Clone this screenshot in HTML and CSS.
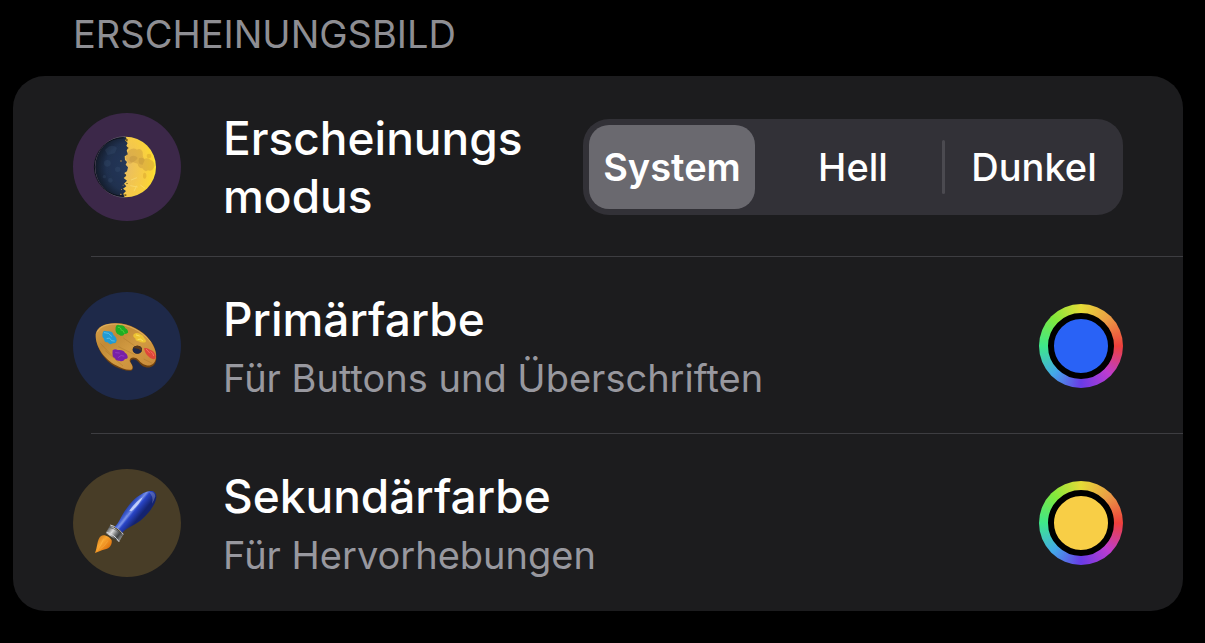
FILE: index.html
```html
<!DOCTYPE html>
<html lang="de">
<head>
  <meta charset="UTF-8">
  <title>Einstellungen</title>
  <meta name="viewport" content="width=device-width, initial-scale=1.0">
  <link rel="stylesheet" href="styles.css">
</head>
<body>

  <h2 class="section-title">ERSCHEINUNGSBILD</h2>

  <div class="card">

    <!-- Erscheinungsmodus -->
    <div class="row">
      <div class="icon icon-mode">
        <svg viewBox="9 13 324 324" aria-hidden="true">
          <defs>
            <radialGradient id="moonLight" cx="0.1" cy="0.5" r="0.9">
              <stop offset="0" stop-color="#e9bd62"/>
              <stop offset="0.5" stop-color="#f6ca48"/>
              <stop offset="0.85" stop-color="#fbd733"/>
              <stop offset="1" stop-color="#fff03a"/>
            </radialGradient>
            <radialGradient id="moonDark" cx="0.6" cy="0.5" r="0.6">
              <stop offset="0" stop-color="#263a5e"/>
              <stop offset="0.7" stop-color="#20314f"/>
              <stop offset="1" stop-color="#131b29"/>
            </radialGradient>
            <clipPath id="moonClip"><circle cx="167" cy="175" r="91"/></clipPath>
          </defs>
          <circle cx="167" cy="175" r="91" fill="url(#moonDark)"/>
          <g clip-path="url(#moonClip)">
            <path d="M163 82 L170 89 L165 95 L173 103 L169 111 L174 117 L170 126 L174 137 L164 143 L165 154 L171 160 L167 168 L174 176 L171 188 L163 193 L169 201 L161 208 L171 216 L162 225 L169 233 L159 240 L168 247 L160 255 L165 269 H262 V82 Z" fill="url(#moonLight)"/>
            <path d="M178 124 q12 -9 23 -1 q11 -6 17 7 q-1 12 4 21 q13 -6 20 3 q11 4 12 17 q-7 20 -20 14 q-9 7 -17 -6 q-13 -2 -14 -14 l-14 -4 q-11 8 -16 0 l-6 -13 q2 -17 11 -24 Z" fill="#b98a3a" opacity="0.35"/>
            <path d="M180 145 q13 -9 23 3 q-7 12 -19 13 q-9 -4 -4 -16 Z M207 149 q12 -5 17 5 l-6 14 q-16 1 -11 -19 Z" fill="#a87c35" opacity="0.25"/>
            <circle cx="237" cy="142" r="7" fill="#d39a2a" opacity="0.4"/>
            <ellipse cx="224" cy="201" rx="5" ry="9" fill="#d39a2a" opacity="0.4"/>
            <path d="M183 214 l18 -7 M181 231 l22 4 M192 248 l8 -17 M211 229 l14 10" stroke="#fff39b" stroke-width="3" opacity="0.35"/>
            <path d="M165 91 h8 v7 h-5 Z M171 116 h4 v4 h-4 Z M164 196 h4 v4 h-4 Z M169 223 h4 v3 h-4 Z M163 257 h6 v5 h-6 Z" fill="#55421c" opacity="0.8"/>
            <path d="M151 155 h4 v4 h-4 Z M158 228 h3 v3 h-3 Z M153 241 h3 v3 h-3 Z M150 255 h5 v4 h-5 Z" fill="#c89642" opacity="0.8"/>
            <g fill="#496384" opacity="0.18">
              <path d="M105 124 q20 -22 36 -6 l-7 16 l-21 5 Z"/>
              <circle cx="112" cy="164" r="10"/>
              <circle cx="143" cy="182" r="8"/>
              <circle cx="121" cy="215" r="7"/>
              <circle cx="103" cy="204" r="5"/>
            </g>
          </g>
          <path d="M165 84 A91 91 0 0 0 165 266" fill="none" stroke="#76777b" stroke-width="2"/>
          <path d="M161 87 A88 88 0 0 0 161 263" fill="none" stroke="#0c111b" stroke-width="3"/>
        </svg>
      </div>
      <div class="text">
        <div class="title" id="modeLabel">Erscheinungs<wbr>modus</div>
      </div>
      <div class="segmented" role="radiogroup" aria-labelledby="modeLabel">
        <label class="segment"><input type="radio" name="mode" value="system" checked>System</label>
        <span class="separator"></span>
        <label class="segment"><input type="radio" name="mode" value="light">Hell</label>
        <span class="separator"></span>
        <label class="segment"><input type="radio" name="mode" value="dark">Dunkel</label>
      </div>
    </div>

    <hr>

    <!-- Primärfarbe -->
    <div class="row">
      <div class="icon icon-primary">
        <svg viewBox="9 12 324 324" aria-hidden="true">
          <defs>
            <linearGradient id="wood" x1="0" y1="0" x2="1" y2="1">
              <stop offset="0" stop-color="#d7a04a"/>
              <stop offset="0.3" stop-color="#c18a36"/>
              <stop offset="0.55" stop-color="#d29b42"/>
              <stop offset="1" stop-color="#c7893a"/>
            </linearGradient>
          </defs>
          <path d="M78 142 C80 119 103 106 135 106 C177 104 220 128 240 156 C254 174 263 198 258 219 C254 235 240 242 225 237 C212 233 207 221 197 215 C189 211 180 215 182 223 C187 234 192 238 187 246 C177 253 154 244 136 236 C104 219 77 181 78 142 Z" fill="#71420f"/>
          <path fill-rule="evenodd" d="M77 139 C80 117 104 106 135 106 C177 105 218 128 239 156 C253 174 262 197 257 214 C253 230 240 236 227 231 C213 228 208 216 198 210 C187 205 178 211 179 219 C184 229 191 235 186 244 C176 249 155 241 138 232 C106 216 75 178 77 139 Z M188 185 a14 12 0 1 0 28 0 a14 12 0 1 0 -28 0 Z" fill="url(#wood)"/>
          <path d="M82 132 C92 111 121 106 147 109 C190 113 226 140 242 163" fill="none" stroke="#e6bd70" stroke-width="2"/>
          <path d="M91 166 L132 209 M145 176 L194 200 M160 150 L193 173 M221 213 L247 226 M106 188 L159 234" stroke="#a26c24" stroke-width="2" opacity="0.5"/>
          <path d="M188 185 a14 12 0 1 0 28 0 a14 12 0 1 0 -28 0 Z" fill="#1c284a"/>
          <path d="M190 181 q5 -11 17 -7 q11 5 8 16 q-10 -12 -25 -9 Z" fill="#5c3a18"/>
          <path d="M98 135 q2 -10 12 -5 q18 -2 20 10 q11 9 10 18 q-2 9 -11 8 q-10 6 -16 -3 q-11 0 -11 -11 q-7 -5 -4 -17 Z" fill="#239bd2"/>
          <path d="M103 134 l12 2 l10 9 M111 151 q9 -5 14 7 l8 1" fill="none" stroke="#68ccf1" stroke-width="3" stroke-linecap="round" opacity="0.7"/>
          <path d="M137 117 q3 -10 13 -5 q12 -3 16 9 q9 4 8 13 q-5 4 -11 4 q-5 10 -16 2 q-13 -4 -10 -23 Z" fill="#1fae23"/>
          <path d="M145 118 q8 -1 9 9 M158 127 l5 8" fill="none" stroke="#62df42" stroke-width="3" stroke-linecap="round" opacity="0.7"/>
          <path d="M191 139 q8 -7 18 -2 q11 4 14 14 q8 8 3 12 q-12 2 -20 -3 q-10 0 -10 -9 q-9 -4 -5 -12 Z" fill="#edc333"/>
          <path d="M199 141 l9 3 M204 154 q8 -4 14 4" fill="none" stroke="#ffea70" stroke-width="3" stroke-linecap="round" opacity="0.8"/>
          <path d="M222 181 q8 -4 18 4 q13 4 17 17 q2 12 -7 12 q-10 -2 -16 -10 q-8 -5 -12 -23 Z" fill="#df4639"/>
          <path d="M229 184 l10 11 M243 191 q7 5 8 12" fill="none" stroke="#ff8071" stroke-width="3" stroke-linecap="round" opacity="0.7"/>
          <path d="M128 187 q7 -6 15 -1 q17 -2 22 8 q9 5 8 16 q-2 3 -8 3 q-7 11 -17 5 q-10 2 -14 -8 q-9 -2 -6 -23 Z" fill="#7820a6"/>
          <path d="M137 194 l11 1 M145 208 q8 -10 17 -4" fill="none" stroke="#a14ad0" stroke-width="3" stroke-linecap="round" opacity="0.6"/>
        </svg>
      </div>
      <div class="text">
        <label class="title" for="primaryColor">Primärfarbe</label>
        <div class="subtitle">Für Buttons und Überschriften</div>
      </div>
      <input type="color" class="color-well" id="primaryColor" value="#2962f6">
    </div>

    <hr>

    <!-- Sekundärfarbe -->
    <div class="row">
      <div class="icon icon-secondary">
        <svg viewBox="9 12 324 324" aria-hidden="true">
          <defs>
            <linearGradient id="handle" gradientUnits="userSpaceOnUse" x1="174" y1="120" x2="212" y2="151">
              <stop offset="0" stop-color="#233b9c"/>
              <stop offset="0.25" stop-color="#405fd2"/>
              <stop offset="0.4" stop-color="#7890e8"/>
              <stop offset="0.55" stop-color="#2945c7"/>
              <stop offset="1" stop-color="#14236f"/>
            </linearGradient>
            <linearGradient id="ferrule" gradientUnits="userSpaceOnUse" x1="112" y1="192" x2="155" y2="225">
              <stop offset="0" stop-color="#5c5e5e"/>
              <stop offset="0.3" stop-color="#dedede"/>
              <stop offset="0.5" stop-color="#858788"/>
              <stop offset="0.7" stop-color="#3e4041"/>
              <stop offset="1" stop-color="#a9aaab"/>
            </linearGradient>
            <linearGradient id="bristle" x1="0" y1="0" x2="1" y2="1">
              <stop offset="0" stop-color="#b9630f"/>
              <stop offset="0.4" stop-color="#f9a52f"/>
              <stop offset="0.7" stop-color="#e47d14"/>
              <stop offset="1" stop-color="#91500c"/>
            </linearGradient>
          </defs>
          <path d="M75 264 C83 248 80 225 92 214 C102 206 120 216 125 226 C127 237 121 250 106 253 C94 256 86 261 75 264 Z" fill="url(#bristle)"/>
          <path d="M82 257 Q94 240 101 221 M91 252 Q105 242 113 229" fill="none" stroke="#ffd169" stroke-width="2" opacity="0.4"/>
          <path d="M121 180 L160 208 L147 231 L107 204 Z" fill="url(#ferrule)"/>
          <path d="M121 180 Q146 187 160 208 M110 202 Q134 209 147 230" fill="none" stroke="#d7d8da" stroke-width="3"/>
          <path d="M118 187 Q143 193 156 213" fill="none" stroke="#4b4d50" stroke-width="2"/>
          <path d="M133 186 C148 174 150 157 169 131 C187 105 213 82 240 78 C252 77 260 84 259 97 C257 119 238 141 220 159 C198 181 174 184 157 203 C151 195 143 189 133 186 Z" fill="url(#handle)"/>
          <path d="M178 137 Q199 108 218 97 Q209 118 184 139 Z" fill="#d8e1ff" opacity="0.8"/>
          <path d="M145 187 Q160 170 171 153" fill="none" stroke="#7890e6" stroke-width="5" stroke-linecap="round" opacity="0.7"/>
          <path d="M237 82 Q254 78 256 94 Q253 106 246 116 Q252 94 237 82 Z" fill="#7a88c5" opacity="0.5"/>
        </svg>
      </div>
      <div class="text">
        <label class="title" for="secondaryColor">Sekundärfarbe</label>
        <div class="subtitle">Für Hervorhebungen</div>
      </div>
      <input type="color" class="color-well" id="secondaryColor" value="#f8ce46">
    </div>

  </div>

</body>
</html>
```

FILE: styles.css
```css
/* Grundlayout */
body {
  margin: 0;
  padding: 10px 22px 32px 13px;
  background: #000;
  color: #fff;
  font-family: Inter, "Liberation Sans", sans-serif;
}

.section-title {
  margin: 0 0 18px;
  padding-left: 60px;
  font-size: 38px;
  line-height: 48px;
  font-weight: 400;
  color: #8e8e93;
}

/* Karte mit Zeilen */
.card {
  padding-bottom: 1px;
  background: #1c1c1e;
  border-radius: 32px;
  overflow: hidden;
}
.card hr {
  height: 1px;
  margin: 0 0 0 78px;
  border: none;
  background: #3d3d41;
}
.row {
  display: flex;
  align-items: center;
  padding: 33px 60px 31px;
}
.text {
  flex: 1;
  margin-left: 42px;
}
.title {
  display: block;
  font-size: 46px;
  line-height: 58px;
  font-weight: 500;
}
.subtitle {
  margin-top: 6px;
  font-size: 38px;
  line-height: 48px;
  color: #98989f;
}

/* Runde Symbole */
.icon {
  flex: none;
  width: 108px;
  height: 108px;
  border-radius: 50%;
}
.icon svg {
  display: block;
}
.icon-mode {
  background: #3c2849;
}
.icon-primary {
  background: #1e2949;
}
.icon-secondary {
  background: #483d27;
}

/* Umschalter System / Hell / Dunkel */
.segmented {
  display: flex;
  flex: 0 1 540px;
  align-items: center;
  box-sizing: border-box;
  padding: 6px;
  border-radius: 26px;
  background: #323137;
}
.segment {
  flex: 1 1 0;
  border-radius: 20px;
  font-size: 38px;
  line-height: 84px;
  font-weight: 500;
  text-align: center;
  cursor: pointer;
}
.segment input {
  position: absolute;
  opacity: 0;
  pointer-events: none;
}
.segment:has(input:checked) {
  background: #6a696f;
  font-weight: 600;
}
.separator {
  width: 3px;
  height: 54px;
  margin: 0 6px;
  border-radius: 2px;
  background: #4b4a50;
}
.segment:has(input:checked) + .separator {
  background: transparent;
}

/* Farbwähler */
.color-well {
  flex: none;
  appearance: none;
  box-sizing: border-box;
  width: 84px;
  height: 84px;
  padding: 9px;
  border: none;
  border-radius: 50%;
  background: conic-gradient(#e6dc37, #eb9d45, #ee403c, #bd3cd0, #693be6, #43a9e8, #3ee88a, #80e83c, #e6dc37);
  cursor: pointer;
}
.color-well::-webkit-color-swatch-wrapper {
  padding: 0;
}
.color-well::-webkit-color-swatch {
  border: 6px solid #000;
  border-radius: 50%;
}
```
